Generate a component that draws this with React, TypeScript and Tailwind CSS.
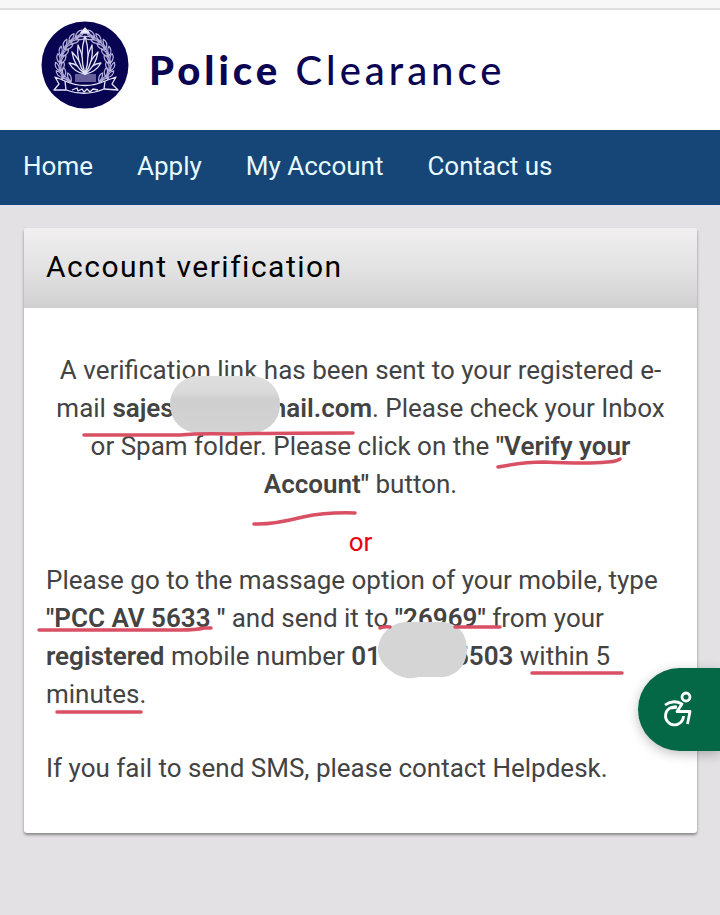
import { ReactNode } from "react";

const navLinks = ["Home", "Apply", "My Account", "Contact us"];

// leaf angles and positions shared by both halves of the wreath
const wreathLeaves = [
  { x: 26, y: 59, r: -40 },
  { x: 20, y: 53, r: -25 },
  { x: 18, y: 46, r: -5 },
  { x: 19, y: 38, r: 10 },
  { x: 21, y: 31, r: 22 },
  { x: 25, y: 24, r: 38 },
  { x: 31, y: 18, r: 52 },
  { x: 38, y: 14, r: 64 },
];

function WreathHalf() {
  return (
    <g>
      {wreathLeaves.map((leaf) => (
        <g key={leaf.y} transform={`translate(${leaf.x} ${leaf.y}) rotate(${leaf.r})`}>
          <path d="M0 4Q-5 0 -3 -5Q1 -2 0 4Z" />
          <path d="M2 4Q7 0 5 -5Q1 -2 2 4Z" />
          <path d="M1 5V-4" />
        </g>
      ))}
    </g>
  );
}

function PoliceLogo() {
  return (
    <svg viewBox="0 0 88 88" className="size-22 shrink-0" role="img" aria-label="Police crest">
      <circle cx="44" cy="44" r="43.5" fill="#090452" />
      <g fill="none" stroke="#b5b2dc" strokeWidth="1.2" strokeLinejoin="round">
        <WreathHalf />
        <g transform="translate(88 0) scale(-1 1)">
          <WreathHalf />
        </g>
        <rect x="34" y="53" width="21" height="8" fill="#665d9b" stroke="none" />
      </g>
      <g fill="#090452" stroke="#e3e3f8" strokeWidth="1.3" strokeLinejoin="round">
        <path d="M44 53Q34 52 28 42Q38 43 44 53Z" />
        <path d="M44 53Q54 52 60 42Q50 43 44 53Z" />
        <path d="M44 53Q33 45 31 31Q40 40 44 53Z" />
        <path d="M44 53Q55 45 57 31Q48 40 44 53Z" />
        <path d="M44 53Q35 40 37 24Q43 36 44 53Z" />
        <path d="M44 53Q53 40 51 24Q45 36 44 53Z" />
        <path d="M44 53Q38 34 44 15Q50 34 44 53Z" />
        <path d="M44 7L40 12H48Z" fill="#f4f4ff" />
        <path d="M14 56L24 60Q44 69 64 60L75 56L71 63L77 69L63 68Q44 76 25 69L13 69L18 63Z" />
        <path d="M24 60L25 69M64 60L63 68" fill="none" />
        <path d="M31 69l5-2 1 3 4-2 2 3 3-3 3 3 3-3 5 1" fill="none" />
      </g>
    </svg>
  );
}

function AccessibilityIcon() {
  return (
    <svg viewBox="0 0 30 38" className="h-[38px] w-[30px]" fill="none" stroke="white" strokeWidth="2.8" strokeLinejoin="round">
      <circle cx="23" cy="6" r="4" />
      <path d="M2 14Q10 8 19 13L14 20.500H27L24.500 33" />
      <path d="M13 16A9 9 0 1 0 20.500 25" />
      <path d="M14 16L8 17" />
    </svg>
  );
}

// Redaction blobs and marker strokes drawn over the message
function Markup() {
  return (
    <svg className="pointer-events-none absolute top-0 left-0 h-full w-full overflow-visible" aria-hidden="true">
      <defs>
        <linearGradient id="blob" x1="0" y1="0" x2="0" y2="1">
          <stop offset="0" stopColor="#dedede" />
          <stop offset="0.3" stopColor="#dadada" />
          <stop offset="0.4" stopColor="#cfcfcf" />
          <stop offset="1" stopColor="#d3d3d3" />
        </linearGradient>
      </defs>
      <rect x="146" y="68" width="110" height="57" rx="28" fill="url(#blob)" />
      <path d="M354 343C354 327 367 313 386 314H420C435 316 443 327 443 341C443 357 433 367 420 369H394C380 375 355 360 354 343Z" fill="#d5d5d5" />
      <g fill="none" stroke="#d94f63" strokeWidth="3.500" strokeLinecap="round">
        <path d="M60 127H156Q175 125 210 126Q240 125 329 125" />
        <path d="M474 159Q500 154 520 154Q565 156 583 154Q591 154 596 151" />
        <path d="M230 216Q247 217 279 209Q303 204 331 205" />
        <path d="M15 322H156Q172 322 180 320H187" />
        <path d="M356 320Q361 318 366 319M431 319H476" />
        <path d="M508 365H598M33 404H117" />
      </g>
    </svg>
  );
}

function Strong({ children }: { children: ReactNode }) {
  return <strong className="font-semibold">{children}</strong>;
}

export default function App() {
  return (
    <div className="flex min-h-screen flex-col bg-[#e3e1e3] font-['Roboto',sans-serif]">
      <div className="h-[10px] border-b-2 border-[#dedede] bg-[#f7f7f7]" />

      {/* Site header */}
      <header className="flex h-[120px] items-start gap-5 bg-white pt-[11px] pl-[41px] text-[#0b0452]">
        <PoliceLogo />
        <h1 className="pt-[24px] font-['Lato',sans-serif] text-[40px] leading-[50px] font-medium tracking-widest whitespace-nowrap">
          <b className="font-black">Police</b> Clearance
        </h1>
      </header>

      <nav className="flex h-[77px] gap-11 border-b-2 border-[#dfe2ef] bg-[#164577] px-[23px] pt-[17px] text-[26px] leading-[38px] whitespace-nowrap text-[#e6faff]">
        {navLinks.map((link) => (
          <a key={link} href="#">
            {link}
          </a>
        ))}
      </nav>

      {/* Verification card */}
      <main className="px-6 pt-[21px] pb-20">
        <section className="mr-[-1px] rounded-[3px] bg-white shadow-[0_2px_3px_#00000066]">
          <h2 className="h-20 rounded-t-[3px] bg-linear-to-b from-[#f1eff0] via-[#e3e3e3] to-[#d0d0d0] px-[22px] pt-[20px] text-[30px] leading-[38px] tracking-wider text-black">
            Account verification
          </h2>
          <div className="relative px-[22px] pt-[43px] pb-[46px] text-[26px] leading-[38px] text-[#434343]">
            <p className="text-center">
              A verification link has been sent to your registered e-mail{" "}
              <Strong>
                sajes
                <span className="inline-block w-[90px]" />
                mail.com
              </Strong>
              . Please check your Inbox or Spam folder. Please click on the{" "}
              <Strong>"Verify your Account"</Strong> button.
            </p>
            <p className="pt-[20px] text-center text-[#e8000d]">or</p>
            <p>
              Please go to the massage option of your mobile, type <Strong>"PCC AV 5633 "</Strong> and send it to{" "}
              <Strong>"26969"</Strong> from your <Strong>registered</Strong> mobile number{" "}
              <Strong>
                01
                <span className="inline-block w-[73px]" />
                5503
              </Strong>{" "}
              within 5 minutes.
            </p>
            <p className="pt-[36px]">If you fail to send SMS, please contact Helpdesk.</p>
            <Markup />
          </div>
        </section>
      </main>

      <button
        aria-label="Accessibility options"
        className="fixed top-[668px] right-0 flex h-[83px] w-[82px] items-center rounded-l-full bg-[#046846] pl-[25px] shadow-[0_3px_12px_#00000040]"
      >
        <AccessibilityIcon />
      </button>
    </div>
  );
}
